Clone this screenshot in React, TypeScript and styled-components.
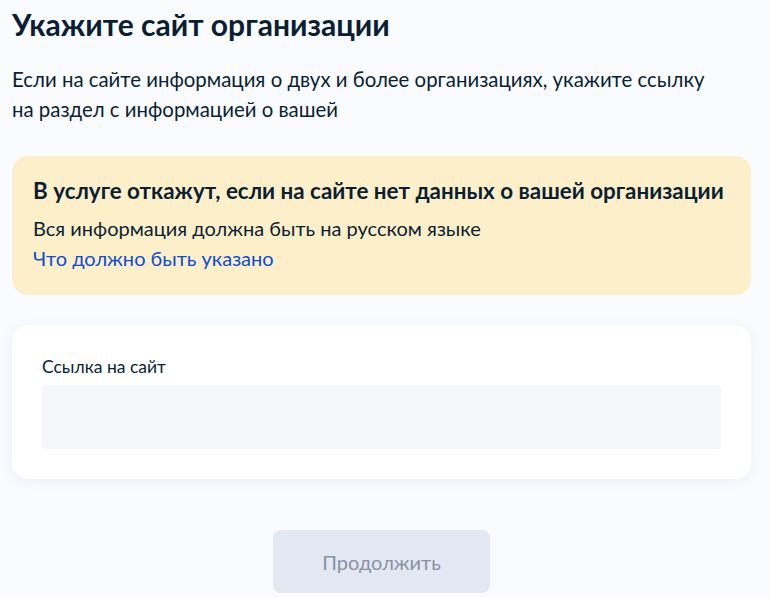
import React from 'react'
import styled, { createGlobalStyle } from 'styled-components'

const GlobalStyle = createGlobalStyle`
  html, body {
    margin: 0;
    padding: 0;
    background: #f9fbfe;
  }
  body {
    font-family: Lato, "Noto Sans", sans-serif;
    color: #0b1f33;
  }
`

const Page = styled.main`
  width: 739px;
  margin-left: 12px;
  padding-top: 4px;
`

const Title = styled.h1`
  margin: 0;
  font-size: 30px;
  line-height: 40px;
  font-weight: 700;
`

const Lead = styled.p`
  margin: 20px 0 0;
  font-size: 20.4px;
  line-height: 30px;
`

const Notice = styled.section`
  margin-top: 32px;
  padding: 20px 21px 22px;
  background: #feefcb;
  border-radius: 16px;
`

const NoticeTitle = styled.h3`
  margin: 0;
  font-size: 22.4px;
  line-height: 30px;
  font-weight: 700;
`

const NoticeText = styled.p`
  margin: 7px 0 0;
  font-size: 20px;
  line-height: 30px;
`

const NoticeLink = styled.a`
  display: block;
  font-size: 20px;
  line-height: 30px;
  color: #0d4cd3;
  text-decoration: none;
`

const Card = styled.section`
  margin-top: 30px;
  padding: 30px;
  background: #fff;
  border-radius: 16px;
  box-shadow: 0 2px 12px rgba(66, 88, 151, 0.08);
`

const Label = styled.label`
  display: block;
  font-size: 17.5px;
  line-height: 24px;
  margin-bottom: 6px;
`

const Input = styled.input`
  display: block;
  box-sizing: border-box;
  width: 100%;
  height: 64px;
  border: none;
  border-radius: 4px;
  background: #f5f6fa;
  outline: none;
`

const Actions = styled.div`
  display: flex;
  justify-content: center;
  margin-top: 51px;
`

const Button = styled.button`
  width: 217px;
  height: 63px;
  border: none;
  border-radius: 8px;
  background: #e4e8f2;
  color: #8692a4;
  font-family: Lato, "Noto Sans", sans-serif;
  font-size: 20px;
`

const App = () => (
  <>
    <GlobalStyle />
    <Page>
      <Title>Укажите сайт организации</Title>
      <Lead>
        Если на сайте информация о двух и более организациях, укажите ссылку
        <br />
        на раздел с информацией о вашей
      </Lead>
      <Notice>
        <NoticeTitle>В услуге откажут, если на сайте нет данных о вашей организации</NoticeTitle>
        <NoticeText>Вся информация должна быть на русском языке</NoticeText>
        <NoticeLink href="#">Что должно быть указано</NoticeLink>
      </Notice>
      <Card>
        <Label htmlFor="site">Ссылка на сайт</Label>
        <Input id="site" />
      </Card>
      <Actions>
        <Button disabled>Продолжить</Button>
      </Actions>
    </Page>
  </>
)

export default App
